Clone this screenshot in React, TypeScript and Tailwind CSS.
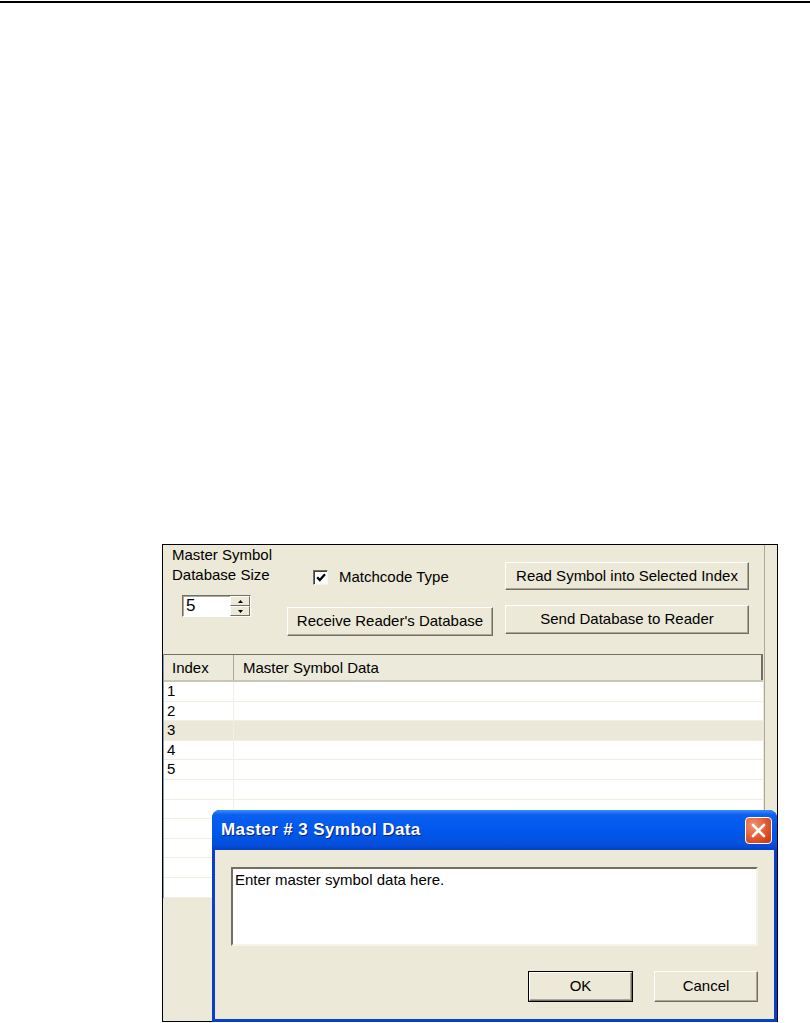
import React from "react";

const font = "font-['Liberation_Sans',Arial,sans-serif]";
const bevel =
  "border border-t-white border-l-white border-r-[#716F64] border-b-[#716F64] shadow-[inset_-1px_-1px_0_#ACA899] bg-[#ECE9D8]";

function Btn({ label, className }: { label: string; className: string }) {
  return (
    <div className={`${bevel} flex items-center justify-center text-[15px] text-black ${className}`}>
      {label}
    </div>
  );
}

const rows = ["1", "2", "3", "4", "5", "", "", "", "", "", ""];

export default function App() {
  return (
    <div className={`relative min-h-[1023px] w-full bg-white ${font}`}>
      <div className="mt-px h-[2px] w-full bg-black" />

      {/* captured program window */}
      <div className="relative ml-[162px] mt-[541px] h-[478px] w-[616px] border border-black bg-[#ECE9D8]">
        <div className="flex h-full">
          <div className="flex w-[602px] flex-col border-r border-[#ACA899]">
            {/* settings strip */}
            <div className="flex h-[109px] text-[15px] text-black">
              <div className="w-[124px] pl-[9px]">
                <div className="leading-[20px]">
                  <p>Master Symbol</p>
                  <p>Database Size</p>
                </div>
                <div className="ml-[10px] mt-[10px] flex h-[22px] w-[69px] border border-t-[#716F64] border-l-[#716F64] border-r-white border-b-white bg-white shadow-[inset_1px_1px_0_#ACA899]">
                  <div className="flex-1 pl-[3px] text-[17px] leading-[20px]">5</div>
                  <div className="flex w-[20px] flex-col bg-[#ECE9D8]">
                    <div className="flex flex-1 items-center justify-center border border-t-white border-l-white border-r-[#716F64] border-b-[#716F64]">
                      <svg width="5" height="3" viewBox="0 0 5 3">
                        <path d="M2.5 0L5 3H0z" fill="#000" />
                      </svg>
                    </div>
                    <div className="flex flex-1 items-center justify-center border border-t-white border-l-white border-r-[#716F64] border-b-[#716F64]">
                      <svg width="5" height="3" viewBox="0 0 5 3">
                        <path d="M0 0h5L2.5 3z" fill="#000" />
                      </svg>
                    </div>
                  </div>
                </div>
              </div>

              <div className="flex w-[218px] flex-col">
                <div className="ml-[26px] mt-[23px] flex items-center gap-[11px]">
                  <div className="flex h-[15px] w-[15px] items-center justify-center border border-t-[#716F64] border-l-[#716F64] border-r-[#F5F4EA] border-b-[#F5F4EA] bg-white shadow-[inset_1px_1px_0_#404040]">
                    <svg width="10" height="9" viewBox="0 0 10 9">
                      <path d="M1.2 4.2l2.6 2.8L9 1.2" stroke="#000" strokeWidth="2.2" fill="none" />
                    </svg>
                  </div>
                  <span className="leading-[18px]">Matchcode Type</span>
                </div>
                <Btn label="Receive Reader's Database" className="mt-[21px] h-[29px] w-[206px]" />
              </div>

              <div className="flex flex-col">
                <Btn label="Read Symbol into Selected Index" className="mt-[17px] h-[28px] w-[244px]" />
                <Btn label="Send Database to Reader" className="mt-[15px] h-[29px] w-[244px]" />
              </div>
            </div>

            {/* list view */}
            <div className="flex w-[600px] flex-col border-l border-[#7F9DB9] text-[15px] text-black">
              <div className="flex h-[28px] border-t border-[#716F64] border-b-2 border-b-[#CBC7B8] bg-[#EBEADB] leading-[26px]">
                <div className="w-[70px] border-r border-[#ACA899] pl-[8px]">Index</div>
                <div className="flex-1 border-r-2 border-[#716F64] pl-[9px]">Master Symbol Data</div>
              </div>
              {rows.map((r, i) => (
                <div
                  key={i}
                  className={`flex h-[19.6px] border-b border-[#F1EFE2] leading-[18px] ${i === 2 ? "bg-[#EBE8D9]" : "bg-white"}`}
                >
                  <div className="w-[70px] border-r border-[#F1EFE2] pl-[3px]">{r}</div>
                  <div className="flex-1" />
                </div>
              ))}
            </div>
          </div>
        </div>

        {/* modal dialog */}
        <div className="absolute left-[49px] top-[265px] flex h-[212px] w-[565px] flex-col overflow-hidden rounded-t-[8px] bg-[#0A3FC9]">
          <div className="flex h-[40px] items-center justify-between bg-[linear-gradient(#3A8CFF_0%,#0A5FEF_12%,#0058EE_50%,#0450DC_85%,#0340C8_100%)] pl-[9px] pr-[5px]">
            <span className="text-[17px] font-bold tracking-[0.4px] text-white [text-shadow:1px_1px_0_#0A1F7A]">
              Master # 3 Symbol Data
            </span>
            <div className="flex h-[27px] w-[27px] items-center justify-center rounded-[4px] border border-white bg-[radial-gradient(circle_at_30%_30%,#F29473,#E0562E_55%,#C2350F)]">
              <svg width="15" height="15" viewBox="0 0 15 15">
                <path d="M2 2l11 11M13 2L2 13" stroke="#fff" strokeWidth="2.6" strokeLinecap="round" />
              </svg>
            </div>
          </div>
          <div className="mx-[3px] mb-[3px] flex flex-1 flex-col bg-[#ECE9D8] px-[16px] pt-[17px] text-[15px] text-black">
            <div className="h-[79px] border-2 border-t-[#716F64] border-l-[#716F64] border-r-[#F5F4EA] border-b-[#F5F4EA] bg-white pl-[2px] pt-[1px] leading-[20px]">
              Enter master symbol data here.
            </div>
            <div className="mt-[25px] flex justify-end gap-[21px]">
              <div className="border border-black">
                <Btn label="OK" className="h-[29px] w-[103px]" />
              </div>
              <Btn label="Cancel" className="h-[31px] w-[104px]" />
            </div>
          </div>
        </div>
      </div>
    </div>
  );
}
